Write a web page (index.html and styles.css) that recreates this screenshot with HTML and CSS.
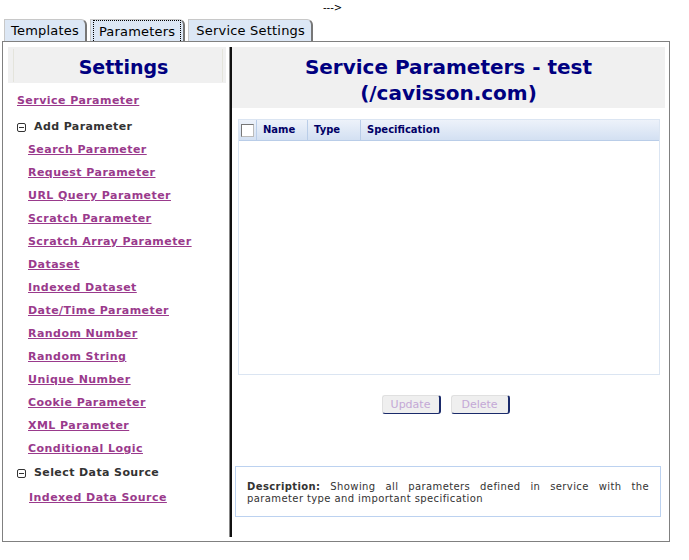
FILE: index.html
```html
<!DOCTYPE html>
<html>
<head>
<meta charset="utf-8">
<link rel="stylesheet" href="styles.css">
</head>
<body>
<div class="arrow">---&gt;</div>
<div class="tabs">
  <div class="tab">Templates</div>
  <div class="tab active"><span class="focus">Parameters</span></div>
  <div class="tab wide">Service Settings</div>
</div>
<div class="frame">
  <div class="left">
    <div class="left-head"><span>Settings</span></div>
    <div class="menu">
      <a class="lnk top-lnk" href="#">Service Parameter</a>
      <div class="group"><span class="minus"></span>Add Parameter</div>
      <a class="lnk sub" href="#">Search Parameter</a>
      <a class="lnk sub" href="#">Request Parameter</a>
      <a class="lnk sub" href="#">URL Query Parameter</a>
      <a class="lnk sub" href="#">Scratch Parameter</a>
      <a class="lnk sub" href="#">Scratch Array Parameter</a>
      <a class="lnk sub" href="#">Dataset</a>
      <a class="lnk sub" href="#">Indexed Dataset</a>
      <a class="lnk sub" href="#">Date/Time Parameter</a>
      <a class="lnk sub" href="#">Random Number</a>
      <a class="lnk sub" href="#">Random String</a>
      <a class="lnk sub" href="#">Unique Number</a>
      <a class="lnk sub" href="#">Cookie Parameter</a>
      <a class="lnk sub" href="#">XML Parameter</a>
      <a class="lnk sub" href="#">Conditional Logic</a>
      <div class="group"><span class="minus"></span>Select Data Source</div>
      <a class="lnk sub sub2" href="#">Indexed Data Source</a>
    </div>
  </div>
  <div class="divider"></div>
  <div class="right">
    <div class="right-head">Service Parameters - test<br>(/cavisson.com)</div>
    <div class="grid">
      <div class="grid-head">
        <div class="c-check"><span class="box"></span></div>
        <div class="c-name">Name</div>
        <div class="c-type">Type</div>
        <div class="c-spec">Specification</div>
      </div>
      <div class="grid-body"></div>
    </div>
    <div class="buttons">
      <button class="btn">Update</button>
      <button class="btn">Delete</button>
    </div>
    <div class="desc"><b>Description:</b> Showing all parameters defined in service with the parameter type and important specification</div>
  </div>
</div>
</body>
</html>
```

FILE: styles.css
```css
html, body {
  margin: 0;
  padding: 0;
  background: #ffffff;
  font-family: "DejaVu Sans", Verdana, sans-serif;
  width: 689px;
  height: 560px;
  overflow: hidden;
}

.arrow {
  height: 16px;
  padding-left: 323px;
  font-size: 10px;
  line-height: 16px;
  color: #000;
}

.tabs {
  display: flex;
  gap: 3px;
  margin-left: 4px;
  height: 25px;
  align-items: flex-end;
}

.tab {
  box-sizing: border-box;
  height: 22px;
  padding: 0 6px;
  font-size: 13px;
  letter-spacing: 0.2px;
  line-height: 22px;
  color: #000;
  background: #dce7f5;
  border: 1px solid #c8c8c8;
  border-right: 2px solid #777;
  border-bottom: none;
  border-top-right-radius: 6px;
}

.tab.wide {
  padding: 0 6px 0 7px;
}

.tab.active {
  padding: 0 2px;
  display: flex;
  align-items: stretch;
}

.focus {
  border: 1px dotted #000;
  border-bottom: none;
  padding: 0 5px;
  line-height: 21px;
}

.frame {
  width: 668px;
  height: 501px;
  margin-left: 2px;
  box-sizing: border-box;
  border: 1px solid #808080;
  padding: 5px 4px 0 5px;
  display: flex;
}

.left {
  width: 221px;
}

.left-head {
  width: 218px;
  height: 36px;
  background: #f0f0f0;
  display: flex;
  align-items: center;
  justify-content: center;
  box-sizing: border-box;
  border-left: 5px solid #f0f0f0;
  border-right: 3px solid #f0f0f0;
}

.left-head span {
  font-size: 19px;
  font-weight: bold;
  color: #000080;
  border-left: 1px solid #e4e4dc;
  border-right: 1px solid #e4e4dc;
  width: 100%;
  box-sizing: border-box;
  padding-left: 11px;
  text-align: center;
  line-height: 30px;
  padding-top: 3px;
  margin-top: 1px;
}

.menu {
  display: flex;
  flex-direction: column;
  padding-top: 9px;
}

.lnk {
  font-size: 11px;
  font-weight: bold;
  letter-spacing: 0.45px;
  color: #9a3a8c;
  text-decoration: underline;
  height: 23px;
  line-height: 18px;
  align-self: flex-start;
}

.top-lnk {
  margin-left: 9px;
  height: 25px;
}

.sub {
  margin-left: 20px;
}

.sub2 {
  margin-left: 21px;
  margin-top: 2px;
}

.group {
  display: flex;
  align-items: center;
  font-size: 11px;
  font-weight: bold;
  letter-spacing: 0.4px;
  color: #333;
  height: 24px;
  line-height: 18px;
  margin-left: 9px;
  margin-top: -2px;
  margin-bottom: 2px;
}

.minus {
  width: 7px;
  height: 7px;
  border: 1px solid #333;
  border-radius: 2px;
  margin-right: 8px;
  position: relative;
  background: #fff;
}

.minus::after {
  content: "";
  position: absolute;
  left: 1px;
  right: 1px;
  top: 3px;
  height: 1px;
  background: #333;
}

.divider {
  width: 3px;
  height: 490px;
  box-sizing: border-box;
  border-left: 1px solid #888;
  background: #111;
}

.right {
  width: 433px;
  display: flex;
  flex-direction: column;
}

.right-head {
  height: 61px;
  background: #f0f0f0;
  text-align: center;
  font-size: 20px;
  font-weight: bold;
  color: #000080;
  line-height: 26px;
  padding-top: 7px;
  box-sizing: border-box;
}

.grid {
  margin: 11px 5px 0 6px;
  border: 1px solid #dbe5f2;
}

.grid-head {
  display: flex;
  height: 20px;
  background: linear-gradient(#edf2fa, #d3e0f2);
  border-bottom: 1px solid #b9cde8;
  font-size: 10px;
  font-weight: bold;
  color: #000066;
  line-height: 20px;
}

.c-check {
  width: 17px;
  border-right: 1px solid #b9cde8;
  display: flex;
  align-items: center;
  justify-content: flex-end;
}

.box {
  width: 11px;
  height: 11px;
  border: 1px solid #777;
  background: #fff;
  margin-right: 2px;
  border-right-color: #bbb;
  border-bottom-color: #bbb;
}

.c-name {
  width: 51px;
  padding-left: 6px;
  box-sizing: border-box;
  border-right: 1px solid #b9cde8;
}

.c-type {
  width: 53px;
  padding-left: 6px;
  box-sizing: border-box;
  border-right: 1px solid #b9cde8;
}

.c-spec {
  padding-left: 6px;
}

.grid-body {
  height: 233px;
  background: #fff;
}

.buttons {
  display: flex;
  justify-content: center;
  gap: 10px;
  margin-top: 20px;
  padding-right: 6px;
}

.btn {
  width: 59px;
  height: 19px;
  padding: 0;
  font-family: "DejaVu Sans", Verdana, sans-serif;
  font-size: 11px;
  color: #c4a8d6;
  background: #efefef;
  border: 1px solid #e0e0e0;
  border-right: 2px solid #1a2a6a;
  border-bottom: 1px solid #1a2a6a;
  border-radius: 3px;
}

.desc {
  margin: 52px 4px 0 3px;
  height: 51px;
  box-sizing: border-box;
  border: 1px solid #bcd2f0;
  padding: 14px 11px 0 11px;
  font-size: 10px;
  letter-spacing: 0.4px;
  line-height: 12px;
  color: #333;
  text-align: justify;
}

.desc b {
  color: #333;
}
```
